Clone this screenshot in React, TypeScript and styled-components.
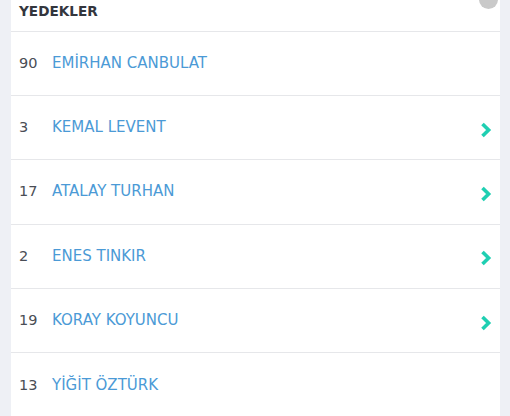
import styled, { createGlobalStyle } from 'styled-components';

const GlobalStyle = createGlobalStyle`
  html, body {
    margin: 0;
    padding: 0;
    background: #eef0f5;
    font-family: "DejaVu Sans", "Noto Sans", sans-serif;
  }
`;

type Player = { no: number; name: string; sub: boolean };

const players: Player[] = [
  { no: 90, name: 'EMİRHAN CANBULAT', sub: false },
  { no: 3, name: 'KEMAL LEVENT', sub: true },
  { no: 17, name: 'ATALAY TURHAN', sub: true },
  { no: 2, name: 'ENES TINKIR', sub: true },
  { no: 19, name: 'KORAY KOYUNCU', sub: true },
  { no: 13, name: 'YİĞİT ÖZTÜRK', sub: false },
];

const Chevron = () => (
  <svg width="12" height="16" viewBox="0 0 12 16">
    <path d="M2.5 2 L8.6 8 L2.5 14" fill="none" stroke="#1fcfb2" strokeWidth="3.6" strokeLinejoin="miter" />
  </svg>
);

const App = () => {
  return (
    <>
      <GlobalStyle />
      <S.Page>
        <S.Card>
          <S.Header>
            <S.Title>YEDEKLER</S.Title>
            <S.Dot />
          </S.Header>
          {players.map((p) => (
            <S.Row key={p.no}>
              <S.Number>{p.no}</S.Number>
              <S.Name>{p.name}</S.Name>
              {p.sub && (
                <S.Arrow>
                  <Chevron />
                </S.Arrow>
              )}
            </S.Row>
          ))}
        </S.Card>
      </S.Page>
    </>
  );
};

export default App;

const S = {
  Page: styled.div`
    padding: 0 10px 0 11px;
    height: 416px;
    overflow: hidden;
  `,

  Card: styled.div`
    position: relative;
    background: #fff;
  `,

  Header: styled.div`
    height: 31.5px;
    padding: 2px 8px 0;
    box-sizing: border-box;
    border-bottom: 1.5px solid #e6e7ea;
  `,

  Title: styled.h2`
    margin: 0;
    font-size: 13.6px;
    font-weight: 700;
    line-height: 18px;
    color: #33363d;
  `,

  Dot: styled.span`
    position: absolute;
    top: -10px;
    right: 2px;
    width: 19px;
    height: 19px;
    border-radius: 50%;
    background: #c9c9c9;
  `,

  Row: styled.div`
    display: flex;
    align-items: center;
    height: 64.4px;
    padding: 0 8px 1px;
    box-sizing: border-box;
    border-bottom: 1.5px solid #e6e7ea;
  `,

  Number: styled.span`
    width: 33px;
    font-size: 14.5px;
    color: #4a4d55;
  `,

  Name: styled.span`
    flex: 1;
    font-size: 15px;
    color: #4b9ad6;
  `,

  Arrow: styled.span`
    display: flex;
    margin-top: 5px;
  `,
};
